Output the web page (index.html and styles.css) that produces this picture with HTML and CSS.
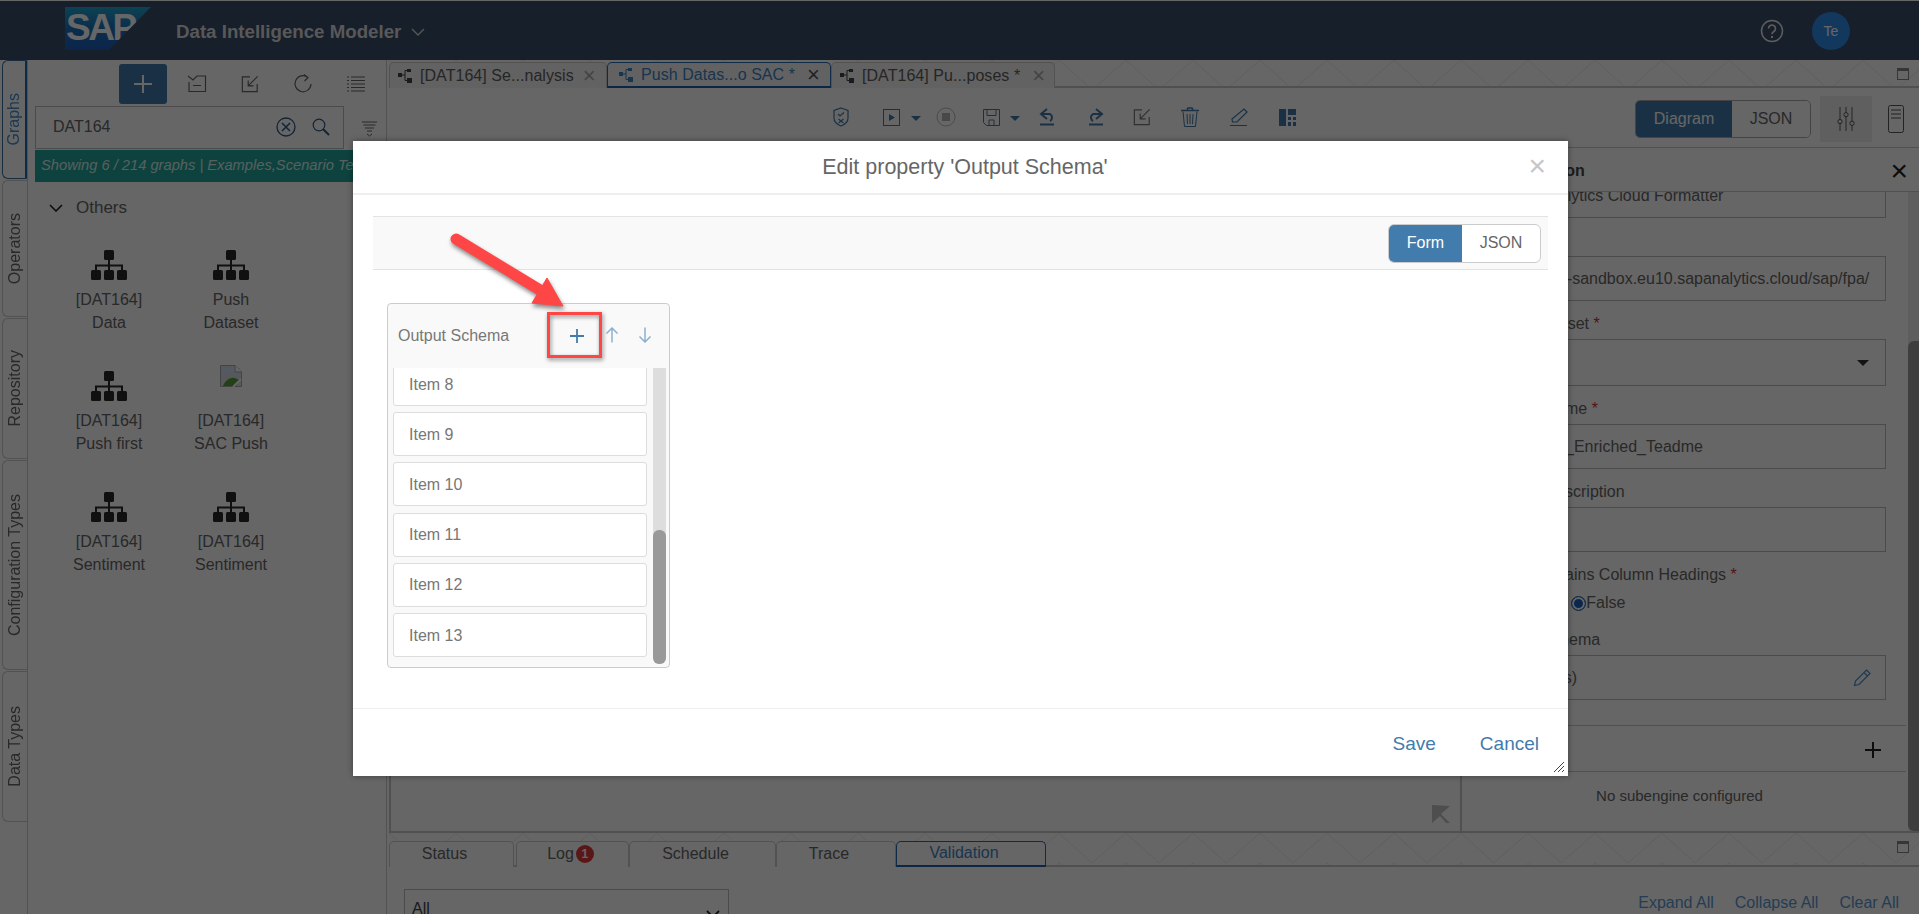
FILE: index.html
```html
<!DOCTYPE html>
<html lang="en">
<head>
<meta charset="utf-8">
<title>Data Intelligence Modeler</title>
<link rel="stylesheet" href="styles.css">
</head>
<body>
<svg class="defs" width="0" height="0" aria-hidden="true">
  <defs>
    <symbol id="graph" viewBox="0 0 36 30">
      <rect x="13" y="0" width="10" height="10" rx="1.5" fill="currentColor"/>
      <rect x="0" y="20" width="10" height="10" rx="1.5" fill="currentColor"/>
      <rect x="13" y="20" width="10" height="10" rx="1.5" fill="currentColor"/>
      <rect x="26" y="20" width="10" height="10" rx="1.5" fill="currentColor"/>
      <path d="M18 10v10M5 20v-4.500h26V20" fill="none" stroke="currentColor" stroke-width="2"/>
    </symbol>
    <symbol id="flow" viewBox="0 0 14 14">
      <rect x="0" y="4" width="4" height="4" fill="currentColor"/>
      <rect x="9" y="0" width="4" height="3" fill="currentColor"/>
      <rect x="9" y="9" width="5" height="5" fill="currentColor"/>
      <path d="M4 6h3M7 1.500h2M7 1.500v10h2" fill="none" stroke="currentColor" stroke-width="1"/>
    </symbol>
    <symbol id="import" viewBox="0 0 20 20">
      <path d="M10 2H1.500v16.500H18V10M18.500 1.500L8 12M8 6v6h6" fill="none" stroke="currentColor" stroke-width="1.300"/>
    </symbol>
  </defs>
</svg>

<div class="app">
  <header class="shell">
    <div class="logo"><span class="logo-text">SAP</span></div>
    <div class="app-title">Data Intelligence Modeler</div>
    <svg class="app-chevron" width="14" height="8" viewBox="0 0 14 8"><path d="M1 1l6 6 6-6" fill="none" stroke="currentColor" stroke-width="1.300"/></svg>
    <div class="shell-right">
      <svg class="help" width="24" height="24" viewBox="0 0 24 24"><circle cx="12" cy="12" r="10.500" fill="none" stroke="currentColor" stroke-width="1.500"/><path d="M8.500 9.500a3.500 3.500 0 1 1 5.300 3c-1.300.8-1.800 1.300-1.800 2.800" fill="none" stroke="currentColor" stroke-width="1.600"/><rect x="11" y="17" width="2" height="2" fill="currentColor"/></svg>
      <div class="avatar">Te</div>
    </div>
  </header>

  <div class="workspace">
    <nav class="rail">
      <div class="vtab vtab-active vt-graphs"><span>Graphs</span></div>
      <div class="vtab vt-ops"><span>Operators</span></div>
      <div class="vtab vt-repo"><span>Repository</span></div>
      <div class="vtab vt-conf"><span>Configuration Types</span></div>
      <div class="vtab vt-data"><span>Data Types</span></div>
    </nav>

    <aside class="side">
      <div class="side-tools">
        <button class="add-btn"><svg width="18" height="18" viewBox="0 0 18 18"><path d="M9 0v18M0 9h18" stroke="currentColor" stroke-width="2"/></svg></button>
        <span class="side-icon"><svg width="20" height="20" viewBox="0 0 20 20"><path d="M1 2l5 4 4-4h8.500v15.500H2V8M6 11.500h8" fill="none" stroke="currentColor" stroke-width="1.200"/></svg></span>
        <span class="side-icon"><svg width="18" height="18"><use href="#import"/></svg></span>
        <span class="side-icon"><svg width="20" height="20" viewBox="0 0 20 20"><path d="M15 3.500A8 8 0 1 0 18 10M11 0.500l4 3-3.500 3.500" fill="none" stroke="currentColor" stroke-width="1.200"/></svg></span>
        <span class="side-icon"><svg width="18" height="18" viewBox="0 0 18 18"><path d="M4 2h14M4 5.500h14M4 9h14M4 12.500h14M4 16h14M0 2h2M0 5.500h2M0 9h2M0 12.500h2M0 16h2" stroke="currentColor" stroke-width="1"/></svg></span>
      </div>
      <div class="search-row">
        <div class="search">
          <span class="search-text">DAT164</span>
          <svg class="s-clear" width="20" height="20" viewBox="0 0 20 20"><circle cx="10" cy="10" r="9" fill="none" stroke="currentColor" stroke-width="1.300"/><path d="M6 6l8 8M14 6l-8 8" stroke="currentColor" stroke-width="1.500"/></svg>
          <svg class="s-find" width="18" height="18" viewBox="0 0 18 18"><circle cx="7" cy="7" r="5.800" fill="none" stroke="currentColor" stroke-width="1.200"/><path d="M11 11l6 6" stroke="currentColor" stroke-width="2"/></svg>
        </div>
        <svg class="s-filter" width="16" height="16" viewBox="0 0 16 16"><path d="M0 1h15M1.500 4h12M3 7h9M5 10h5" stroke="currentColor" stroke-width="1"/><path d="M5 13l2.500 2L10 13" fill="none" stroke="currentColor" stroke-width="1"/></svg>
      </div>
      <div class="notice">Showing 6 / 214 graphs | Examples,Scenario Templates</div>
      <div class="group-head">
        <svg width="14" height="8" viewBox="0 0 14 8"><path d="M1 1l6 6 6-6" fill="none" stroke="currentColor" stroke-width="1.600"/></svg>
        <span>Others</span>
      </div>
      <div class="graph-grid">
        <div class="graph"><svg class="g-icon" width="36" height="30"><use href="#graph"/></svg><div class="g-name">[DAT164]<br>Data</div></div>
        <div class="graph"><svg class="g-icon" width="36" height="30"><use href="#graph"/></svg><div class="g-name">Push<br>Dataset</div></div>
        <div class="graph"><svg class="g-icon" width="36" height="30"><use href="#graph"/></svg><div class="g-name">[DAT164]<br>Push first</div></div>
        <div class="graph"><span class="g-broken"><svg width="22" height="22" viewBox="0 0 22 22"><path d="M0.500 0.500H15L21.500 7v14.500H0.500z" fill="#ddd" stroke="#aaa"/><path d="M2 12l6-5 5 4 7-1v-7H2z" fill="#cfe0f5"/><path d="M3 21c3-7 9-10 14-7l3 1-4 6z" fill="#57a33a"/><path d="M15 0.500V7h6.500" fill="#fff" stroke="#aaa"/><path d="M21 14L13 22" stroke="#fff" stroke-width="2"/></svg></span><div class="g-name">[DAT164]<br>SAC Push</div></div>
        <div class="graph"><svg class="g-icon" width="36" height="30"><use href="#graph"/></svg><div class="g-name">[DAT164]<br>Sentiment</div></div>
        <div class="graph"><svg class="g-icon" width="36" height="30"><use href="#graph"/></svg><div class="g-name">[DAT164]<br>Sentiment</div></div>
      </div>
    </aside>

    <main class="main">
      <div class="doc-tabs strip">
        <div class="doc-tab t1"><svg width="14" height="14"><use href="#flow"/></svg><span>[DAT164] Se...nalysis</span><i class="tab-x">×</i></div>
        <div class="doc-tab t2 is-active"><svg width="14" height="14"><use href="#flow"/></svg><span>Push Datas...o SAC *</span><i class="tab-x">×</i></div>
        <div class="doc-tab t3"><svg width="14" height="14"><use href="#flow"/></svg><span>[DAT164] Pu...poses *</span><i class="tab-x">×</i></div>
        <span class="maxi"></span>
      </div>

      <div class="toolbar">
        <div class="tb-icons">
          <svg class="ti i-shield" width="16" height="20" viewBox="0 0 16 20"><path d="M8 1l7 2.500V11c0 4-3 6.500-7 8-4-1.500-7-4-7-8V3.500z" fill="none" stroke="currentColor" stroke-width="1.200"/><path d="M5 7l2 2 4-3.500M5.500 12l5 4M10.500 12l-5 4" fill="none" stroke="currentColor" stroke-width="1.200"/></svg>
          <svg class="ti i-play" width="17" height="17" viewBox="0 0 17 17"><rect x="0.500" y="0.500" width="16" height="16" fill="none" stroke="currentColor"/><path d="M6 5l6 3.500L6 12z" fill="currentColor"/></svg>
          <i class="caret c1"></i>
          <svg class="ti i-stop" width="20" height="20" viewBox="0 0 20 20"><circle cx="10" cy="10" r="9" fill="none" stroke="#bbb" stroke-width="1"/><rect x="6" y="6" width="8" height="8" fill="#b5b5b5"/></svg>
          <svg class="ti i-save" width="17" height="17" viewBox="0 0 17 17"><path d="M0.500 0.500h16v16h-13l-3-3z" fill="none" stroke="currentColor"/><path d="M4 0.500v6h9v-6M6 11h5v5.500H6z" fill="none" stroke="currentColor"/></svg>
          <i class="caret c2"></i>
          <svg class="ti i-undo" width="17" height="18" viewBox="0 0 17 18"><path d="M8 1L2 6l6 5M2 6h9a4 4 0 0 1 0 7" fill="none" stroke="currentColor" stroke-width="2"/><path d="M1 16.500h14" stroke="currentColor" stroke-width="2"/></svg>
          <svg class="ti i-redo" width="17" height="18" viewBox="0 0 17 18"><path d="M9 1l6 5-6 5M15 6H6a4 4 0 0 0 0 7" fill="none" stroke="currentColor" stroke-width="2"/><path d="M2 16.500h14" stroke="currentColor" stroke-width="2"/></svg>
          <svg class="ti i-imp" width="18" height="18"><use href="#import"/></svg>
          <svg class="ti i-trash" width="18" height="20" viewBox="0 0 18 20"><path d="M6 2.500L7 1h4l1 1.500M0 3.500h18" fill="none" stroke="currentColor" stroke-width="1.500"/><path d="M2 4.500l1.500 15h11l1.500-15M6 7l.5 10M9 7v10M12 7l-.5 10" fill="none" stroke="currentColor"/></svg>
          <svg class="ti i-pen" width="18" height="18" viewBox="0 0 18 18"><path d="M14 1l3 3-10 10H2.500L2 11zM0 17.500h17" fill="none" stroke="currentColor" stroke-width="1.200"/></svg>
          <svg class="ti i-lay" width="17" height="17" viewBox="0 0 17 17"><path d="M0 0h7v17H0zM9 0h8v6H9zM9 8h3v3H9zM14 8h3v3h-3zM9 13h3v4H9zM14 13h3v4h-3z" fill="currentColor"/></svg>
        </div>
        <div class="tb-right">
          <div class="seg"><span class="seg-on">Diagram</span><span class="seg-off">JSON</span></div>
          <div class="settings-btn"><svg width="20" height="24" viewBox="0 0 20 28"><path d="M3 0v28M10 0v28M17 0v28" stroke="currentColor"/><circle cx="3" cy="17" r="2.500" fill="#eee" stroke="currentColor"/><circle cx="10" cy="9" r="2.500" fill="#eee" stroke="currentColor"/><circle cx="17" cy="19" r="2.500" fill="#eee" stroke="currentColor"/></svg></div>
          <svg class="doc-i" width="16" height="28" viewBox="0 0 16 28"><rect x="0.500" y="0.500" width="15" height="27" rx="2" fill="none" stroke="currentColor"/><path d="M3 5h10M3 9h10M3 13h10" stroke="currentColor"/></svg>
        </div>
      </div>

      <div class="editor">
        <div class="canvas">
          <svg class="fit" width="18" height="18" viewBox="0 0 18 18"><path d="M0 0L18 1L9 9L18 18L14 18L8 11L0 18z" fill="#c2c2c2"/></svg>
        </div>
        <section class="props">
          <div class="props-head"><span class="props-title">Configuration</span><span class="props-x">×</span></div>
          <div class="props-body">
            <div class="props-form">
              <div class="field f-first"><span>SAP Analytics Cloud Formatter</span></div>
              <label class="lbl">Tenant</label>
              <div class="field"><span>https://abc-sandbox.eu10.sapanalytics.cloud/sap/fpa/</span></div>
              <label class="lbl">Target Dataset <b>*</b></label>
              <div class="field f-sel"><i class="sel-caret"></i></div>
              <label class="lbl">Dataset Name <b>*</b></label>
              <div class="field"><span>Sentiment_Enriched_Teadme</span></div>
              <label class="lbl">Dataset Description</label>
              <div class="field"></div>
              <label class="lbl">Sheet Contains Column Headings <b>*</b></label>
              <div class="radios"><i class="radio"></i><span>True</span><i class="radio radio-on"></i><span>False</span></div>
              <label class="lbl lbl-schema">Output Schema</label>
              <div class="field f-edit"><span>(13 items)</span>
                <svg width="18" height="18" viewBox="0 0 18 18"><path d="M13.500 1l3.500 3.500L6 15.500l-4.500 1 1-4.500zM11 3.500l3.500 3.500" fill="none" stroke="#4a8fcc" stroke-width="1.200"/></svg>
              </div>
              <div class="sub-head"><span>Subengines</span><svg width="18" height="18" viewBox="0 0 18 18"><path d="M9 1v16M1 9h16" stroke="#222" stroke-width="2"/></svg></div>
              <div class="sub-empty">No subengine configured</div>
            </div>
            <div class="props-scroll"><div class="props-thumb"></div></div>
          </div>
        </section>
      </div>

      <div class="bottom-tabs strip">
        <div class="btab b1">Status</div>
        <div class="btab b2">Log<em class="badge">1</em></div>
        <div class="btab b3">Schedule</div>
        <div class="btab b4">Trace</div>
        <div class="btab b5 is-active">Validation</div>
        <span class="maxi"></span>
      </div>
      <div class="bottom-body">
        <div class="filter-sel"><span>All</span><svg width="14" height="8" viewBox="0 0 14 8"><path d="M1 1l6 6 6-6" fill="none" stroke="#222" stroke-width="1.800"/></svg></div>
        <div class="bottom-links"><a>Expand All</a><a>Collapse All</a><a>Clear All</a></div>
      </div>
    </main>
  </div>
</div>

<div class="scrim"></div>

<div class="dialog">
  <div class="dlg-head"><span>Edit property 'Output Schema'</span><span class="dlg-x">×</span></div>
  <div class="dlg-body">
    <div class="dlg-bar"><div class="mode"><span class="mode-on">Form</span><span class="mode-off">JSON</span></div></div>
    <div class="arr">
      <div class="arr-head">
        <span class="arr-title">Output Schema</span>
        <svg class="arr-add" width="16" height="16" viewBox="0 0 16 16"><path d="M8 1v14M1 8h14" stroke="#427cac" stroke-width="1.800"/></svg>
        <svg class="arr-up" width="14" height="16" viewBox="0 0 14 16"><path d="M7 15.500V1M1.500 6.500L7 1l5.500 5.500" fill="none" stroke="#8cb0d0" stroke-width="1.500"/></svg>
        <svg class="arr-down" width="14" height="16" viewBox="0 0 14 16"><path d="M7 .5V15M1.500 9.500L7 15l5.500-5.500" fill="none" stroke="#8cb0d0" stroke-width="1.500"/></svg>
      </div>
      <div class="arr-main">
        <div class="arr-list">
          <div class="arr-item">Item 1</div><div class="arr-item">Item 2</div><div class="arr-item">Item 3</div>
          <div class="arr-item">Item 4</div><div class="arr-item">Item 5</div><div class="arr-item">Item 6</div>
          <div class="arr-item">Item 7</div><div class="arr-item">Item 8</div><div class="arr-item">Item 9</div>
          <div class="arr-item">Item 10</div><div class="arr-item">Item 11</div><div class="arr-item">Item 12</div>
          <div class="arr-item">Item 13</div>
        </div>
        <div class="arr-scroll"><div class="arr-thumb"></div></div>
      </div>
    </div>
  </div>
  <div class="dlg-foot"><a>Save</a><a>Cancel</a>
    <svg class="grip" width="12" height="12" viewBox="0 0 12 12"><path d="M11 1L1 11M11 5l-6 6M11 9l-2 2" stroke="#444" stroke-width="1"/></svg>
  </div>
</div>

<svg class="callout-arrow" width="140" height="100" viewBox="0 0 140 100">
  <path d="M11 12L95 63" stroke="#ff4646" stroke-width="11" stroke-linecap="round"/>
  <path d="M118 79L102 51L87 76z" fill="#ff4646" stroke="#ff4646" stroke-linejoin="round"/>
</svg>
<div class="callout-box"></div>
</body>
</html>
```

FILE: styles.css
```css
* { box-sizing: border-box; }
html, body { margin: 0; height: 914px; overflow: hidden; background: #fff; }
body { font-family: "Liberation Sans", Arial, sans-serif; font-size: 16px; color: #666; position: relative; }
.defs { position: absolute; }
a { color: inherit; }

.app { height: 914px; padding-top: 1px; display: flex; flex-direction: column; background: #fff; }

/* shell */
.shell { height: 59px; flex: none; background: #3a4e6c; display: flex; align-items: center; padding-left: 65px; color: #e8e8e8; }
.logo { width: 86px; height: 43px; margin-top: -4px; background: linear-gradient(180deg, #22a5cf 0%, #1a72bd 50%, #1f5cc0 100%); clip-path: polygon(0 0, 100% 0, 51% 100%, 0 100%); display: flex; align-items: center; }
.logo-text { font-weight: 700; font-size: 37px; letter-spacing: -2.500px; color: #fff; padding-left: 1px; margin-top: -2px; }
.app-title { margin-left: 25px; font-size: 18.700px; font-weight: 700; color: #dcdcdc; margin-top: 3px; }
.app-chevron { margin-left: 10px; margin-top: 3px; color: #ddd; }
.shell-right { margin-left: auto; display: flex; align-items: center; padding-right: 69px; gap: 28px; }
.help { color: #e8e8e8; }
.avatar { width: 38px; height: 38px; border-radius: 50%; background: #2f8cec; color: #fff; font-size: 14px; display: flex; align-items: center; justify-content: center; }

/* layout */
.workspace { flex: 1; display: flex; min-height: 0; }
.rail { width: 28px; flex: none; padding-left: 2px; display: flex; flex-direction: column; gap: 1px; background: #fff; border-right: 1px solid #ccc; }
.vtab { width: 25px; border: 1px solid #ccc; border-right: 0; border-radius: 6px 0 0 6px; background: #fff; display: flex; align-items: center; justify-content: center; }
.vtab span { writing-mode: vertical-rl; transform: rotate(180deg); font-size: 16px; color: #666; white-space: nowrap; }
.vtab-active { border: 1px solid #3d6ea0; border-right: 2px solid #1f6bb5; }
.vtab-active span { color: #4a8fcc; }
.vt-graphs { height: 119px; }
.vt-ops { height: 137px; }
.vt-repo { height: 141px; }
.vt-conf { height: 210px; }
.vt-data { height: 151px; }

.side { width: 359px; flex: none; display: flex; flex-direction: column; background: #fff; border-right: 1px solid #ccc; padding-left: 7px; }
.side-tools { height: 45px; display: flex; align-items: flex-start; padding: 4px 0 0 84px; flex: none; }
.add-btn { width: 48px; height: 40px; background: #427cac; border: 0; border-radius: 3px; color: #fff; display: flex; align-items: center; justify-content: center; padding: 0; }
.side-icon { width: 53px; height: 36px; display: flex; align-items: center; justify-content: center; color: #666; margin-top: 2px; }
.side-icon:nth-child(2) { margin-left: 3px; }
.search-row { display: flex; align-items: center; height: 44px; flex: none; }
.search { width: 309px; height: 43px; border: 1px solid #bbb; display: flex; align-items: center; padding: 0 13px 0 17px; }
.search-text { font-size: 16px; flex: 1; color: #666; }
.s-clear { color: #2a5a8a; }
.s-find { margin-left: 16px; color: #2a5a8a; }
.s-filter { margin-left: 18px; color: #666; margin-top: 4px; }
.notice { height: 32px; flex: none; background: #23a59b; color: #d9f0ee; font-style: italic; font-size: 14.700px; padding-left: 6px; line-height: 30px; white-space: nowrap; overflow: hidden; margin-top: 1px; width: 351px; }
.group-head { display: flex; align-items: center; gap: 13px; height: 23px; margin: 14px 0 0 14px; flex: none; color: #666; }
.group-head span { font-size: 17px; }
.group-head svg { color: #222; }
.graph-grid { display: grid; grid-template-columns: 122px 122px; padding: 31px 0 0 13px; grid-auto-rows: 121px; }
.graph { display: flex; flex-direction: column; align-items: center; text-align: center; color: #666; }
.g-icon { color: #2a2a2a; flex: none; }
.g-broken { height: 30px; display: flex; align-items: flex-start; justify-content: center; margin-top: -6px; margin-bottom: 6px; }
.g-name { margin-top: 8px; line-height: 23px; font-size: 16px; }

.main { flex: 1; min-width: 0; display: flex; flex-direction: column; padding-left: 2px; }
.strip { background-color: #fff; background-image: url("data:image/svg+xml,%3Csvg xmlns='http://www.w3.org/2000/svg' width='67' height='30'%3E%3Cpath d='M0 0L33 30L67 0' fill='none' stroke='%23ececec'/%3E%3C/svg%3E"); border-bottom: 2px solid #c8c8c8; position: relative; display: flex; align-items: flex-end; flex: none; }
.maxi { position: absolute; right: 10px; top: 8px; width: 12px; height: 12px; border: 1.500px solid #888; border-top-width: 3px; }

.doc-tabs { height: 28px; }
.doc-tab { height: 26px; display: flex; align-items: center; gap: 8px; padding-left: 8px; border: 1px solid #ccc; border-bottom: 0; border-radius: 5px 5px 0 0; background: #f4f4f4; font-size: 16px; white-space: nowrap; margin-bottom: -2px; color: #5e5e5e; }
.doc-tab svg { color: #444; flex: none; }
.tab-x { font-style: normal; font-size: 22px; line-height: 20px; margin-left: 4px; color: #aaa; font-weight: 400; }
.t1 { width: 218px; }
.t1 .tab-x { margin-left: 1px; }
.t2 { width: 224px; padding-left: 11px; }
.t3 { width: 224px; }
.doc-tab span { letter-spacing: .05px; }
.doc-tab.is-active { border: 1px solid #2a6cb0; border-bottom: 2px solid #1f63ad; color: #3e83c4; background: #f6f6f6; }
.t2 .tab-x { color: #555; }
.t2 svg { color: #3e83c4; }

.toolbar { height: 60px; flex: none; display: flex; align-items: flex-start; border-bottom: 1px solid #c8c8c8; background: #fff; position: relative; }
.tb-icons { display: flex; align-items: center; height: 58px; padding-left: 444px; color: #427cac; }
.tb-icons .ti { flex: none; }
.i-play { margin-left: 34px; }
.caret { width: 0; height: 0; border-left: 5px solid transparent; border-right: 5px solid transparent; border-top: 5px solid #427cac; flex: none; margin-top: 3px; }
.c1 { margin-left: 11px; }
.i-stop { margin-left: 15px; }
.i-save { margin-left: 27px; }
.c2 { margin-left: 10px; }
.i-undo { margin-left: 19px; }
.i-redo { margin-left: 31px; }
.i-imp { margin-left: 29px; color: #777; }
.i-trash { margin-left: 30px; }
.i-pen { margin-left: 31px; }
.i-lay { margin-left: 31px; }
.tb-right { margin-left: auto; display: flex; align-items: flex-start; padding: 8px 0 0 0; }
.seg { display: flex; width: 176px; height: 38px; border: 1px solid #aaa; border-radius: 5px; overflow: hidden; margin-top: 4px; font-size: 16px; }
.seg-on { width: 96px; background: #427cac; color: #fff; display: flex; align-items: center; justify-content: center; }
.seg-off { flex: 1; display: flex; align-items: center; justify-content: center; color: #666; background: #fff; }
.settings-btn { width: 52px; height: 46px; background: #eee; margin-left: 9px; color: #444; display: flex; align-items: center; justify-content: center; }
.doc-i { margin: 9px 15px 0 16px; color: #555; }

.editor { flex: 1; min-height: 0; display: flex; }
.canvas { flex: 1; position: relative; border: 2px solid #c8c8c8; border-top: 0; background: #fff; }
.fit { position: absolute; right: 10px; bottom: 8px; }
.props { width: 457px; flex: none; display: flex; flex-direction: column; border-bottom: 2px solid #c8c8c8; background: #fff; }
.props-head { height: 44px; flex: none; display: flex; align-items: center; justify-content: space-between; border-bottom: 1px solid #c8c8c8; padding: 3px 11px 0 18px; }
.props-title { font-weight: 700; font-size: 16px; color: #444; }
.props-x { font-size: 30px; line-height: 30px; color: #222; font-weight: 400; }
.props-body { flex: 1; min-height: 0; display: flex; overflow: hidden; }
.props-form { flex: 1; min-width: 0; margin-top: -19px; padding-left: 14px; }
.field { height: 45px; width: 410px; border: 1px solid #bbb; display: flex; align-items: center; padding-left: 16px; white-space: nowrap; overflow: hidden; font-size: 16px; color: #666; position: relative; }
.f-first { padding-left: 27px; }
.f-sel { height: 47px; justify-content: flex-end; padding-right: 16px; }
.sel-caret { width: 0; height: 0; border-left: 6px solid transparent; border-right: 6px solid transparent; border-top: 6px solid #333; }
.f-edit { justify-content: space-between; padding: 0 14px 0 29px; }
.lbl { display: block; height: 18px; line-height: 18px; margin: 14px 0 6px; font-size: 16px; color: #666; padding-left: 9px; white-space: nowrap; }
.lbl b { color: #c33; font-weight: 400; }
.radios { display: flex; align-items: center; height: 22px; margin-top: 8px; padding-left: 39px; font-size: 16px; color: #666; }
.radio { width: 15px; height: 15px; border-radius: 50%; border: 1px solid #888; background: #fff; flex: none; }
.radios span:first-of-type { margin-right: 9px; }
.radio-on { border: 1px solid #2a6cb0; background: #1f63c4; box-shadow: inset 0 0 0 2px #fff; }
.lbl-schema { margin-top: 17px; padding-left: 13px; }
.sub-head { height: 47px; margin-top: 25px; width: 444px; margin-left: -14px; padding: 2px 24px 0 14px; border-top: 1px solid #c8c8c8; border-bottom: 1px solid #c8c8c8; display: flex; align-items: center; justify-content: space-between; font-size: 16px; color: #666; }
.sub-empty { width: 444px; margin-left: -14px; text-align: center; font-size: 15px; color: #666; padding-top: 15px; padding-right: 9px; }
.props-scroll { width: 11px; flex: none; background: #ececec; display: flex; flex-direction: column; justify-content: flex-end; }
.props-thumb { height: 490px; background: #9c9c9c; border-radius: 6px 0 0 6px; }

.bottom-tabs { height: 34px; padding-top: 8px; }
.btab { height: 26px; border: 1px solid #ccc; border-bottom: 0; border-radius: 5px 5px 0 0; background: #fff; display: flex; align-items: center; justify-content: center; font-size: 16px; color: #666; margin-bottom: -2px; padding: 0 14px 2px 0; }
.b1 { width: 125px; }
.b2 { width: 113px; margin-left: 2px; padding-right: 4px; }
.b3 { width: 147px; }
.b4 { width: 120px; }
.b5 { width: 150px; }
.btab.is-active { border: 1px solid #2a6cb0; border-bottom: 2px solid #1f63ad; color: #3e83c4; padding-bottom: 1px; }
.badge { display: inline-flex; width: 18px; height: 18px; border-radius: 50%; background: #e23a3a; color: #fff; font-style: normal; font-size: 12px; font-weight: 700; align-items: center; justify-content: center; margin-left: 2px; }
.bottom-body { height: 47px; flex: none; display: flex; padding: 22px 20px 0 15px; background: #fff; overflow: hidden; }
.filter-sel { width: 325px; height: 46px; flex: none; border: 1px solid #bbb; display: flex; align-items: flex-start; justify-content: space-between; padding: 10px 8px 0 7px; color: #444; }
.filter-sel svg { margin-top: 10px; }
.bottom-links { margin-left: auto; display: flex; gap: 21px; padding-top: 5px; color: #5a9ad0; font-size: 16px; }

/* overlay */
.scrim { position: absolute; inset: 0; background: rgba(0,0,0,.6); }
.dialog { position: absolute; left: 353px; top: 141px; width: 1215px; height: 635px; background: #fff; display: flex; flex-direction: column; box-shadow: 0 0 6px rgba(0,0,0,.4); }
.dlg-head { height: 54px; flex: none; border-bottom: 2px solid #eee; display: flex; align-items: center; justify-content: center; font-size: 21.500px; color: #666; position: relative; }
.dlg-head > span:first-child { margin-left: 9px; }
.dlg-x { position: absolute; right: 22px; top: 10px; font-size: 30px; line-height: 30px; color: #c6c6c6; }
.dlg-body { flex: 1; min-height: 0; padding: 21px 20px 0; }
.dlg-bar { height: 54px; background: #f9f9f9; border-top: 1px solid #e3e3e3; border-bottom: 1px solid #e3e3e3; display: flex; justify-content: flex-end; align-items: center; padding-right: 7px; }
.mode { display: flex; width: 153px; height: 39px; border: 1px solid #ccc; border-radius: 6px; overflow: hidden; font-size: 16px; background: #fff; }
.mode-on { width: 73px; background: #427cac; color: #fff; display: flex; align-items: center; justify-content: center; }
.mode-off { flex: 1; display: flex; align-items: center; justify-content: center; color: #666; }
.arr { margin: 33px 0 0 14px; width: 283px; height: 365px; border: 1px solid #ccc; border-radius: 4px; background: #f9f9f9; display: flex; flex-direction: column; }
.arr-head { height: 64px; flex: none; display: flex; align-items: center; padding-left: 10px; }
.arr-title { font-size: 16px; color: #777; width: 171px; }
.arr-up { margin-left: 20px; margin-top: -2px; }
.arr-down { margin-left: 19px; margin-top: -2px; }
.arr-main { flex: 1; min-height: 0; display: flex; padding: 0 3px 3px 5px; }
.arr-list { width: 254px; flex: none; overflow: hidden; display: flex; flex-direction: column; justify-content: flex-end; gap: 6.200px; padding-bottom: 7px; background: linear-gradient(#fff, #f9f9f9 10%); }
.arr-item { height: 44px; flex: none; background: #fff; border: 1px solid #ddd; border-radius: 3px; display: flex; align-items: center; padding: 1px 0 0 15px; font-size: 16px; color: #777; }
.arr-scroll { width: 13px; margin-left: 6px; background: #ddd; display: flex; flex-direction: column; justify-content: flex-end; border-radius: 0 0 6px 6px; }
.arr-thumb { height: 134px; background: #999; border-radius: 6px; }
.dlg-foot { height: 68px; flex: none; border-top: 1px solid #eee; display: flex; justify-content: flex-end; align-items: center; gap: 44px; padding: 3px 29px 0 0; font-size: 19px; color: #427cac; position: relative; }
.grip { position: absolute; right: 3px; bottom: 3px; }

/* annotation */
.callout-arrow { position: absolute; left: 445px; top: 227px; overflow: visible; filter: drop-shadow(1px 3px 2px rgba(0,0,0,.45)); }
.callout-box { position: absolute; left: 547px; top: 312px; width: 55px; height: 46px; border: 3.500px solid #ff4646; filter: drop-shadow(1px 2px 2px rgba(0,0,0,.45)); }
```
